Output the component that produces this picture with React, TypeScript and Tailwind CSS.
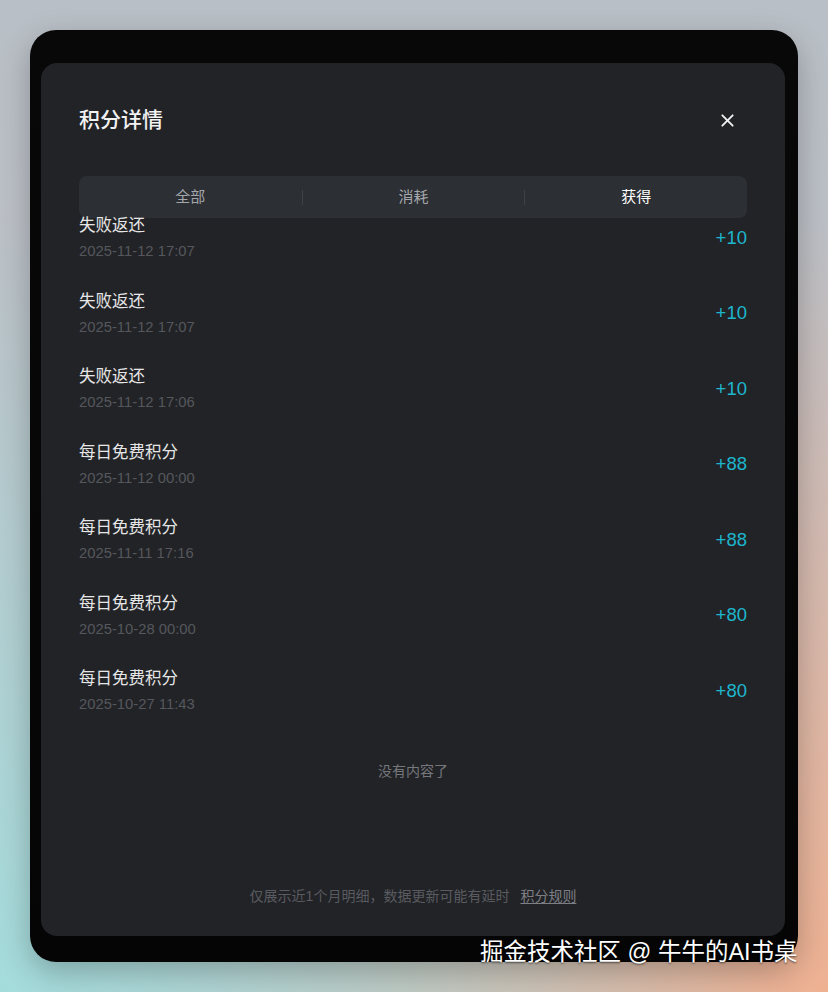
import { ReactElement } from "react";

type RecordType = {
  title: string,
  time: string,
  amount: string,
}

const records: RecordType[] = [
  { title: "失败返还", time: "2025-11-12 17:07", amount: "+10" },
  { title: "失败返还", time: "2025-11-12 17:07", amount: "+10" },
  { title: "失败返还", time: "2025-11-12 17:06", amount: "+10" },
  { title: "每日免费积分", time: "2025-11-12 00:00", amount: "+88" },
  { title: "每日免费积分", time: "2025-11-11 17:16", amount: "+88" },
  { title: "每日免费积分", time: "2025-10-28 00:00", amount: "+80" },
  { title: "每日免费积分", time: "2025-10-27 11:43", amount: "+80" },
];

const tabs = ["全部", "消耗", "获得"];

const CloseIcon = (): ReactElement => (
  <svg width="15" height="15" viewBox="0 0 16 16" fill="none" stroke="#f2f2f2" strokeWidth="2" strokeLinecap="round">
    <path d="M2.5 2.5 13.5 13.5" />
    <path d="M13.5 2.5 2.5 13.5" />
  </svg>
);

const Tabs = ({active}: {active: number}): ReactElement => {
  return (
    <div className="mt-[42px] flex h-[42px] items-center rounded-lg bg-[#2c2f33]">
      {tabs.map((tab, index): ReactElement => (
        <div key={tab} className="flex flex-1 items-center">
          {index > 0 && <div className="h-[15px] w-px bg-[#3f4247]" />}
          <div className={`flex-1 text-center text-[15px] leading-5 ${index === active ? "text-white" : "text-[#a3a6ab]"}`}>
            {tab}
          </div>
        </div>
      ))}
    </div>
  );
};

const RecordRow = ({item}: {item: RecordType}): ReactElement => (
  <li className="flex items-center justify-between">
    <div className="flex flex-col">
      <span className="text-[16.5px] leading-[22px] text-[#e6e6e6]">{item.title}</span>
      <span className="mt-[5px] text-[14.8px] leading-5 text-[#55575c]">{item.time}</span>
    </div>
    <span className="text-[18.5px] leading-6 text-[#1db6cd]">{item.amount}</span>
  </li>
);

function App(): ReactElement {
  return (
    <div
      className="relative h-[992px] w-full overflow-hidden px-[30px] pt-[30px] bg-[radial-gradient(circle_at_0%_100%,#a4dcdc_0%,transparent_60%),radial-gradient(circle_at_100%_100%,#eeb192_0%,transparent_60%),linear-gradient(180deg,#b9bfc6,#c3c1c6)]"
      style={{ fontFamily: '"Liberation Sans", "Noto Sans CJK SC", sans-serif' }}
    >
      <div className="h-[932px] rounded-[26px] bg-[linear-gradient(180deg,#080808,#050505)] pt-[33px] pl-[11px] pr-[13px] pb-[26px] shadow-[0_10px_30px_rgba(0,0,0,0.25)]">
        <section className="flex h-full flex-col rounded-[16px] bg-[#222327] px-[38px] pb-[30px]">
          <div className="flex items-center justify-between pt-[43px]">
            <h1 className="text-[21px] font-medium leading-7 text-[#f2f2f2]">积分详情</h1>
            <div className="mr-[12px]"><CloseIcon /></div>
          </div>
          <Tabs active={2} />
          <ul className="-mt-[4px] flex flex-col gap-[28.5px]">
            {records.map((item, index): ReactElement => (
              <RecordRow item={item} key={index} />
            ))}
          </ul>
          <div className="mt-[47px] text-center text-[14px] leading-5 text-[#75777b]">没有内容了</div>
          <div className="mt-auto text-center text-[14px] leading-5 text-[#595b60]">
            仅展示近1个月明细，数据更新可能有延时
            <span className="ml-[11px] text-[#7d7f84] underline underline-offset-2">积分规则</span>
          </div>
        </section>
      </div>
      <div className="absolute left-[480px] top-[936px] text-[23.5px] leading-[32px] text-white [text-shadow:0_1px_2px_rgba(0,0,0,0.6)]">
        掘金技术社区 @ 牛牛的AI书桌
      </div>
    </div>
  );
}

export default App;
